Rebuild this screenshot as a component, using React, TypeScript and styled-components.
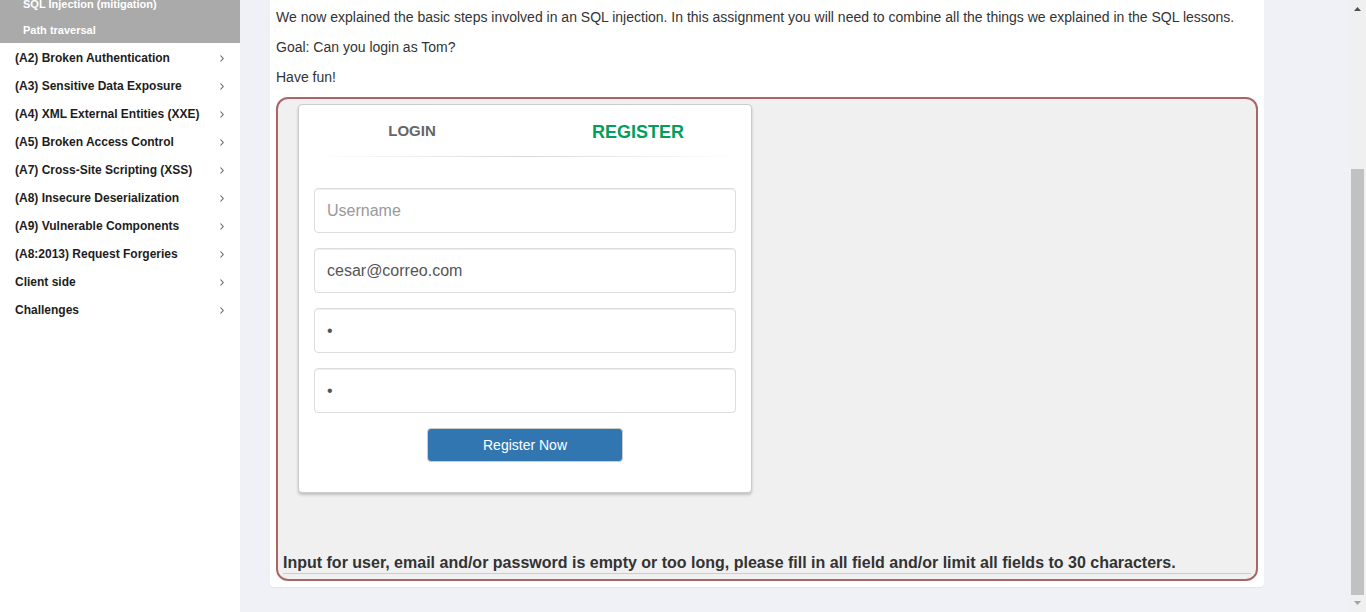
import React from "react";
import styled, { createGlobalStyle } from "styled-components";

const GlobalStyle = createGlobalStyle`
  *, *::before, *::after { box-sizing: border-box; }
  html, body { margin: 0; padding: 0; }
  body {
    font-family: "Liberation Sans", Arial, sans-serif;
    font-size: 14px;
    line-height: 20px;
    color: #333;
    background: #f0f1f7;
  }
`;

const Page = styled.div`
  display: flex;
  height: 100vh;
  overflow: hidden;
`;

const Sidebar = styled.nav`
  flex: 0 0 240px;
  background: #fff;
  overflow: hidden;
`;

const SubMenu = styled.ul`
  list-style: none;
  margin: -9px 0 1px;
  padding: 0;
  background: #aaa;
`;

const SubLink = styled.a`
  display: block;
  padding: 0 23px;
  font-size: 11px;
  font-weight: bold;
  line-height: 26px;
  color: #fff;
  text-decoration: none;
`;

const Menu = styled.ul`
  list-style: none;
  margin: 0;
  padding: 0;
`;

const MenuLink = styled.a`
  display: flex;
  align-items: center;
  justify-content: space-between;
  padding: 0 15px;
  font-size: 12px;
  font-weight: bold;
  line-height: 28px;
  color: #1d1d1d;
  text-decoration: none;
`;

const Chevron = styled.svg`
  width: 6px;
  height: 8px;
`;

const Content = styled.main`
  flex: 1;
  min-width: 0;
  padding: 0 86px 0 30px;
`;

const Panel = styled.section`
  padding: 7px 6px 6px;
  background: #fff;
  border-radius: 0 0 4px 4px;
  box-shadow: 0 1px 1px rgba(0, 0, 0, 0.05);
`;

const Paragraph = styled.p`
  margin: 0 0 10px;
`;

const Attack = styled.div`
  padding: 5px;
  border: 2px solid #a66;
  border-radius: 12px;
  background: #f0f0f0;
`;

const Column = styled.div`
  width: 50%;
  padding: 0 15px;
`;

const Card = styled.div`
  padding-bottom: 30px;
  border: 1px solid #ccc;
  border-radius: 4px;
  background: #fff;
  box-shadow: 0 2px 3px rgba(0, 0, 0, 0.2);
`;

const Tabs = styled.div`
  display: flex;
  height: 51px;
`;

const Tab = styled.a<{ $active?: boolean }>`
  flex: 1;
  text-align: center;
  font-size: ${(p) => (p.$active ? 18 : 15)}px;
  font-weight: bold;
  line-height: ${(p) => (p.$active ? 55 : 51)}px;
  color: ${(p) => (p.$active ? "#029f5b" : "#666")};
  text-decoration: none;
`;

const Divider = styled.hr`
  height: 1px;
  margin: 0 15px 31px;
  border: 0;
  background: linear-gradient(to right, transparent, rgba(0, 0, 0, 0.15), transparent);
`;

const Form = styled.form`
  display: flex;
  flex-direction: column;
  gap: 15px;
  padding: 0 15px;
`;

const Field = styled.input`
  width: 100%;
  height: 45px;
  padding: 6px 12px;
  border: 1px solid #ddd;
  border-radius: 4px;
  background: #fff;
  box-shadow: inset 0 1px 1px rgba(0, 0, 0, 0.075);
  font: inherit;
  font-size: 16px;
  color: #555;
  outline: none;

  &::placeholder { color: #999; opacity: 1; }
`;

const Actions = styled.div`
  padding: 0 113px;
`;

const Submit = styled.button`
  width: 100%;
  height: 34px;
  padding: 0;
  border: 1px solid #ccc;
  border-radius: 4px;
  background: #3276b1;
  font: inherit;
  color: #fff;
`;

const Feedback = styled.div`
  margin-top: 60px;
  font-size: 16px;
  font-weight: bold;
  line-height: 20px;
`;

const Rule = styled.hr`
  height: 1px;
  margin: 0;
  border: 0;
  background: #ccc;
`;

const ScrollBar = styled.div`
  display: flex;
  flex-direction: column;
  flex: 0 0 16px;
  background: #f0f0f0;
`;

const ScrollArrow = styled.svg`
  display: block;
  width: 16px;
  height: 17px;
`;

const ScrollSpace = styled.div`
  flex: 152;
`;

const Thumb = styled.div`
  flex: 426;
  margin: 0 2px 0 1px;
  background: #c1c1c1;
`;

const subItems = ["SQL Injection (mitigation)", "Path traversal"];

const items = [
  "(A2) Broken Authentication",
  "(A3) Sensitive Data Exposure",
  "(A4) XML External Entities (XXE)",
  "(A5) Broken Access Control",
  "(A7) Cross-Site Scripting (XSS)",
  "(A8) Insecure Deserialization",
  "(A9) Vulnerable Components",
  "(A8:2013) Request Forgeries",
  "Client side",
  "Challenges",
];

export default function App() {
  return (
    <>
      <GlobalStyle />
      <Page>
        <Sidebar aria-label="Lessons">
          <SubMenu>
            {subItems.map((s) => (
              <li key={s}>
                <SubLink href="#">{s}</SubLink>
              </li>
            ))}
          </SubMenu>
          <Menu>
            {items.map((s) => (
              <li key={s}>
                <MenuLink href="#">
                  {s}
                  <Chevron viewBox="0 0 6 8" aria-hidden="true">
                    <path d="M1.5 1.5 L4.2 4.5 L1.5 7.5" fill="none" stroke="#666" strokeWidth="1.1" />
                  </Chevron>
                </MenuLink>
              </li>
            ))}
          </Menu>
        </Sidebar>
        <Content>
          <Panel>
            <Paragraph>
              We now explained the basic steps involved in an SQL injection. In this assignment you
              will need to combine all the things we explained in the SQL lessons.
            </Paragraph>
            <Paragraph>Goal: Can you login as Tom?</Paragraph>
            <Paragraph>Have fun!</Paragraph>
            <Attack>
              <Column>
                <Card>
                  <Tabs>
                    <Tab href="#">LOGIN</Tab>
                    <Tab href="#" $active>
                      REGISTER
                    </Tab>
                  </Tabs>
                  <Divider />
                  <Form onSubmit={(e) => e.preventDefault()}>
                    <Field type="text" placeholder="Username" aria-label="Username" />
                    <Field type="email" defaultValue="cesar@correo.com" aria-label="Email address" />
                    <Field type="password" defaultValue="a" aria-label="Password" />
                    <Field type="password" defaultValue="a" aria-label="Confirm password" />
                    <Actions>
                      <Submit type="submit">Register Now</Submit>
                    </Actions>
                  </Form>
                </Card>
              </Column>
              <Feedback role="status">
                Input for user, email and/or password is empty or too long, please fill in all field
                and/or limit all fields to 30 characters.
              </Feedback>
              <Rule />
            </Attack>
          </Panel>
        </Content>
        <ScrollBar aria-hidden="true">
          <ScrollArrow viewBox="0 0 16 17">
            <path d="M4 11 L7.5 7 L11 11 Z" fill="#505050" />
          </ScrollArrow>
          <ScrollSpace />
          <Thumb />
          <ScrollArrow viewBox="0 0 16 17">
            <path d="M4 6 L7.5 10 L11 6 Z" fill="#a3a3a3" />
          </ScrollArrow>
        </ScrollBar>
      </Page>
    </>
  );
}
